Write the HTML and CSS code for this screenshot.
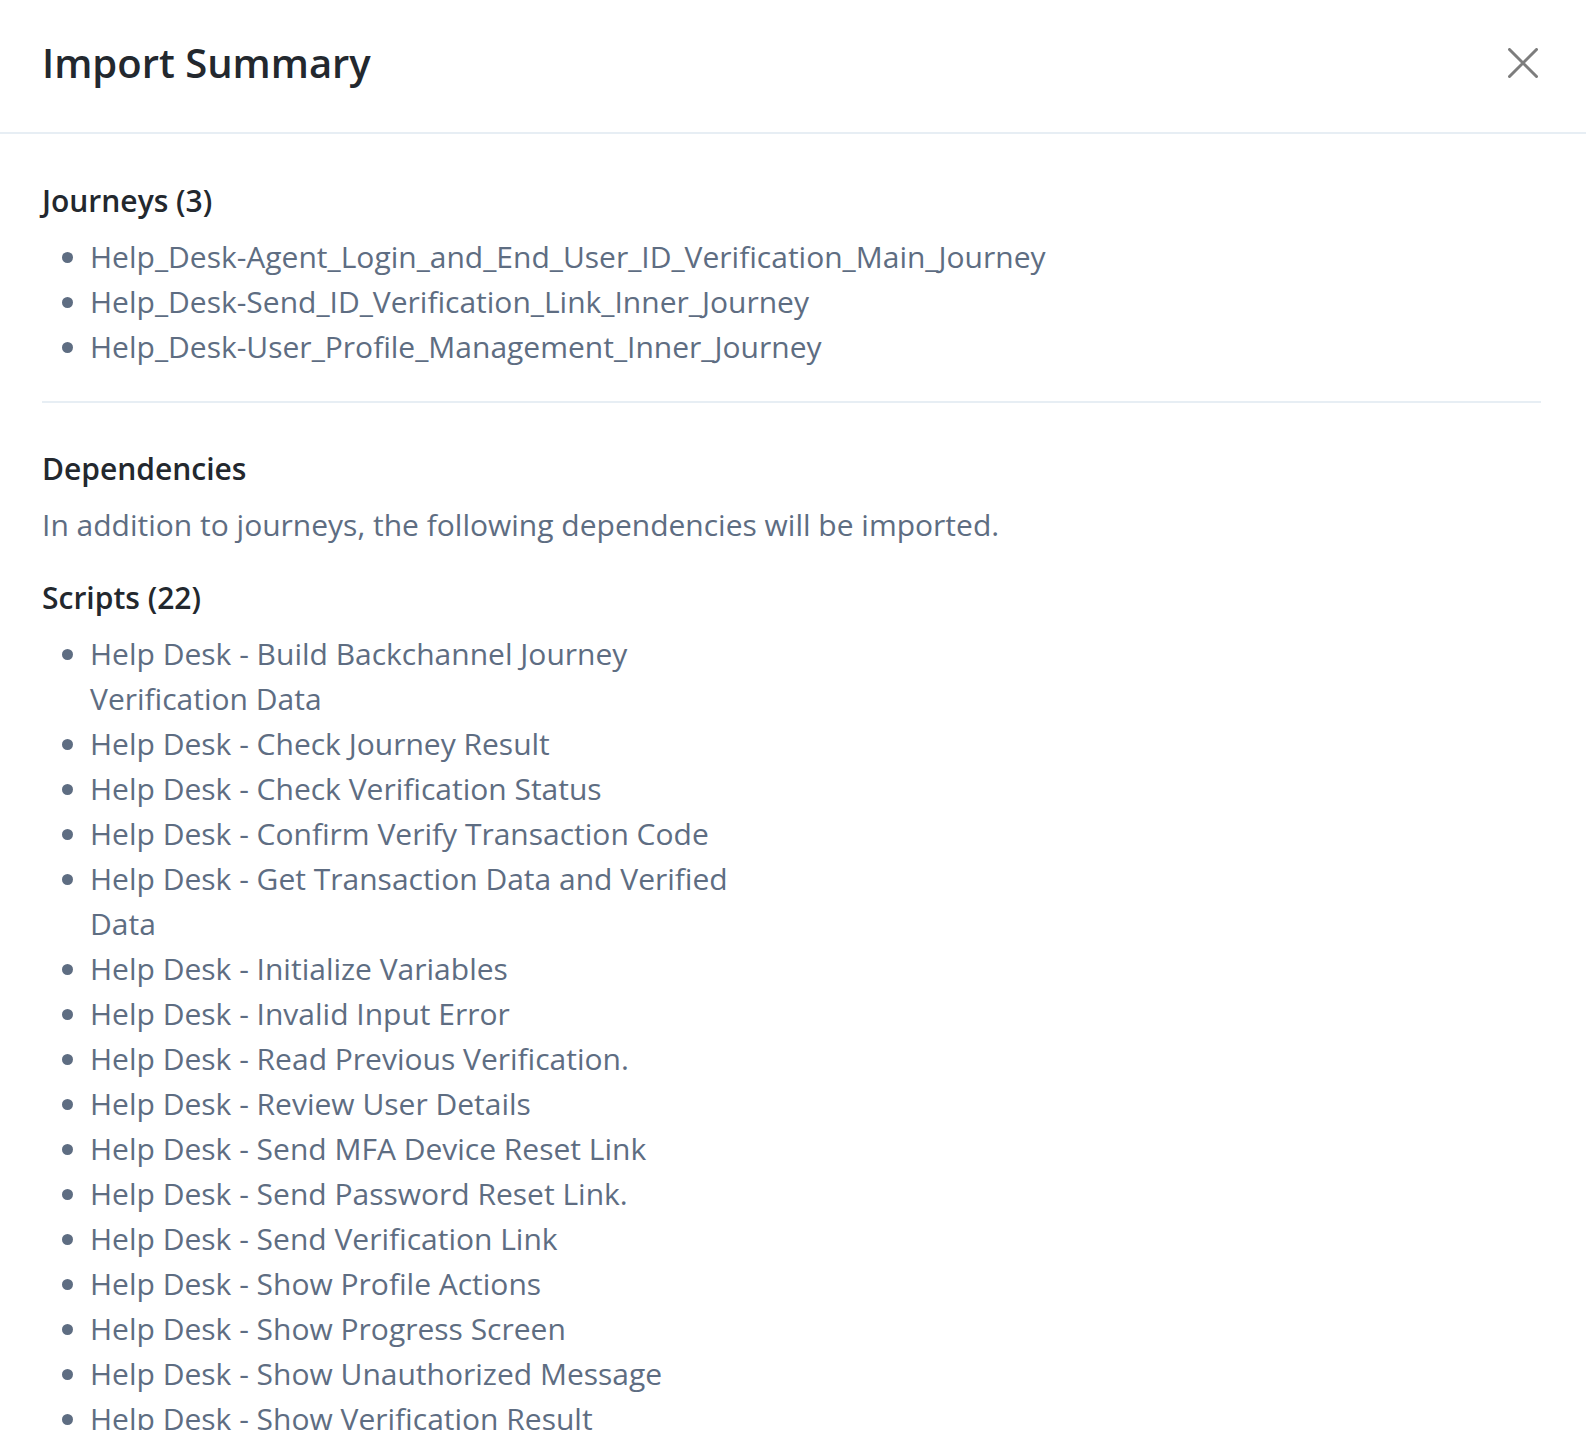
FILE: index.html
```html
<!DOCTYPE html>
<html lang="en">
<head>
    <meta charset="UTF-8">
    <meta name="viewport" content="width=device-width, initial-scale=1.0">
    <title>Import Summary</title>
<link rel="stylesheet" href="styles.css">
</head>
<body>
    <div class="modal">
        <div class="modal-header">
            <h1 class="modal-title">Import Summary</h1>
            <button type="button" class="close" aria-label="Close">
                <svg viewBox="0 0 30 30" width="30" height="30">
                    <path d="M1.5 1.5 L28.5 28.5 M28.5 1.5 L1.5 28.5" stroke="currentColor" stroke-width="3" stroke-linecap="round" fill="none"/>
                </svg>
            </button>
        </div>

        <div class="modal-body">
            <!-- Journeys -->
            <div class="summary-section">
                <h2>Journeys (3)</h2>
                <ul class="item-list">
                    <li>Help_Desk-Agent_Login_and_End_User_ID_Verification_Main_Journey</li>
                    <li>Help_Desk-Send_ID_Verification_Link_Inner_Journey</li>
                    <li>Help_Desk-User_Profile_Management_Inner_Journey</li>
                </ul>
            </div>

            <hr class="divider">

            <!-- Dependencies -->
            <div class="summary-section">
                <h2>Dependencies</h2>
                <p class="section-text">In addition to journeys, the following dependencies will be imported.</p>

                <div class="dep-grid">
                    <div class="dep-group">
                        <h2>Scripts (22)</h2>
                        <ul class="item-list">
                            <li>Help Desk - Build Backchannel Journey Verification Data</li>
                            <li>Help Desk - Check Journey Result</li>
                            <li>Help Desk - Check Verification Status</li>
                            <li>Help Desk - Confirm Verify Transaction Code</li>
                            <li>Help Desk - Get Transaction Data and Verified Data</li>
                            <li>Help Desk - Initialize Variables</li>
                            <li>Help Desk - Invalid Input Error</li>
                            <li>Help Desk - Read Previous Verification.</li>
                            <li>Help Desk - Review User Details</li>
                            <li>Help Desk - Send MFA Device Reset Link</li>
                            <li>Help Desk - Send Password Reset Link.</li>
                            <li>Help Desk - Send Verification Link</li>
                            <li>Help Desk - Show Profile Actions</li>
                            <li>Help Desk - Show Progress Screen</li>
                            <li>Help Desk - Show Unauthorized Message</li>
                            <li>Help Desk - Show Verification Result</li>
                            <li>Help Desk - Start Verification</li>
                            <li>Help Desk - Store Agent Session</li>
                            <li>Help Desk - Unlock User Account</li>
                            <li>Help Desk - Update User Profile</li>
                            <li>Help Desk - Validate Agent Role</li>
                            <li>Help Desk - Verify Transaction Code</li>
                        </ul>
                    </div>
                    <div class="dep-group"></div>
                </div>
            </div>
        </div>
    </div>
</body>
</html>
```

FILE: styles.css
```css
body {
    font-family: "Open Sans", "Liberation Sans", sans-serif;
    background-color: #fff;
    color: #23282e;
    margin: 0;
    padding: 0;
}

.modal {
    background-color: #fff;
}

.modal-header {
    display: flex;
    align-items: center;
    justify-content: space-between;
    padding: 39px 48px 45px 42px;
    border-bottom: 2px solid #e7eef4;
}

.modal-title {
    margin: 0;
    font-size: 40px;
    font-weight: 600;
    line-height: 48px;
    color: #23282e;
}

.close {
    display: flex;
    padding: 0;
    border: none;
    background: none;
    color: #7d7d7d;
    cursor: pointer;
}

.modal-body {
    padding: 46px 45px 40px 42px;
}

.summary-section h2 {
    margin: 0 0 12px;
    font-size: 30px;
    font-weight: 600;
    line-height: 42px;
    color: #23282e;
}

.item-list {
    margin: 0;
    padding-left: 48px;
    list-style: disc;
}

.item-list li {
    font-size: 30px;
    line-height: 45px;
    color: #5e6d82;
}

.divider {
    margin: 32px 0 45px;
    border: none;
    border-top: 2px solid #e7eef4;
}

.section-text {
    margin: 0 0 30px;
    font-size: 30px;
    line-height: 45px;
    color: #5e6d82;
}

.dep-grid {
    display: grid;
    grid-template-columns: 1fr 1fr;
    gap: 32px;
}
```
